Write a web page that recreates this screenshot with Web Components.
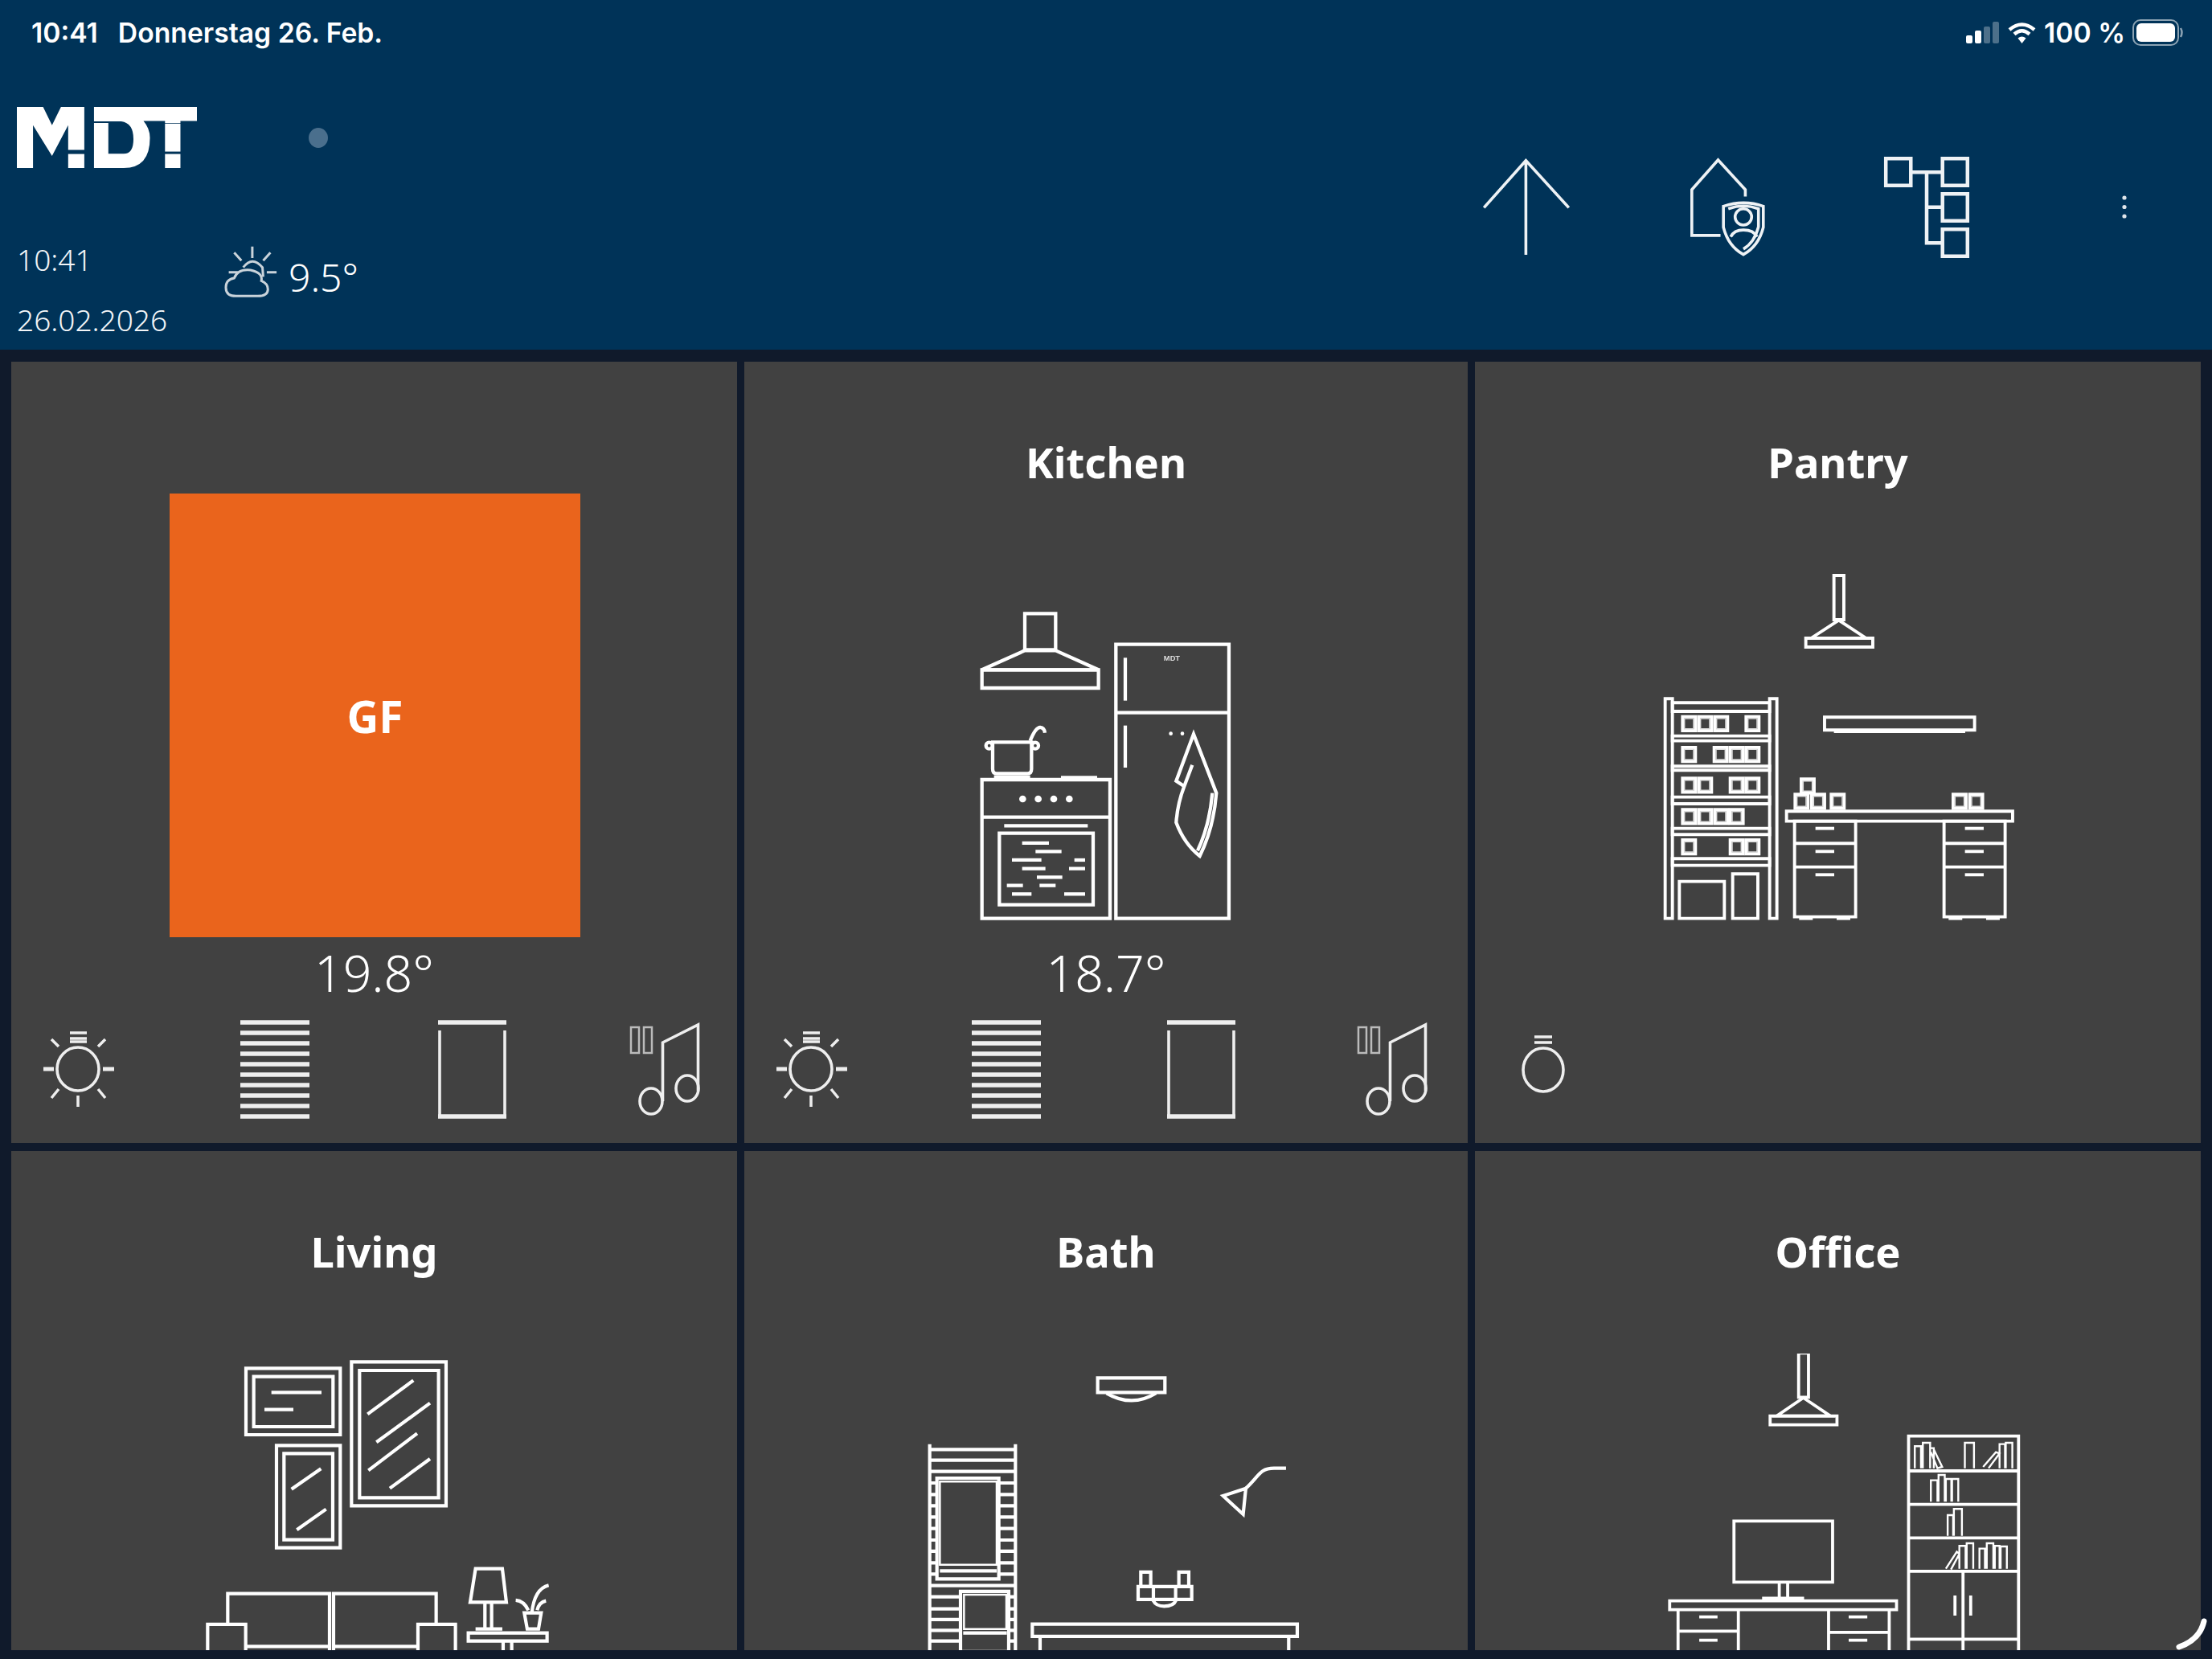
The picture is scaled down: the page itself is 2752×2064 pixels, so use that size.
<!DOCTYPE html>
<html lang="de"><head><meta charset="utf-8"><title>MDT</title>
<style>
html,body{margin:0;padding:0;width:2752px;height:2064px;overflow:hidden;background:#101a2b}
body{font-family:"Noto Sans",Roboto,sans-serif;color:#fff}
</style></head><body>
<app-shell>
  <status-bar></status-bar>
  <app-header></app-header>
  <room-grid>
    <room-tile temp="19.8°" style="--head:164px;--gap:125px"><gf-square>GF</gf-square><action-icon type="sun" slot="actions"></action-icon><action-icon type="blinds" slot="actions"></action-icon><action-icon type="door" slot="actions"></action-icon><action-icon type="music" slot="actions"></action-icon></room-tile>
    <room-tile name="Kitchen" temp="18.7°" style="--gap:122.5px"><scene-art name="kitchen"></scene-art><action-icon type="sun" slot="actions"></action-icon><action-icon type="blinds" slot="actions"></action-icon><action-icon type="door" slot="actions"></action-icon><action-icon type="music" slot="actions"></action-icon></room-tile>
    <room-tile name="Pantry"><scene-art name="pantry"></scene-art><action-icon type="bulb" slot="actions"></action-icon></room-tile>
    <room-tile name="Living"><scene-art name="living"></scene-art></room-tile>
    <room-tile name="Bath"><scene-art name="bath"></scene-art></room-tile>
    <room-tile name="Office"><scene-art name="office"></scene-art></room-tile>
  </room-grid>
  <scroll-mark></scroll-mark>
</app-shell>
<script>
const FONT='"Noto Sans",Roboto,sans-serif';
function def(name,html,init){customElements.define(name,class extends HTMLElement{constructor(){super();this.attachShadow({mode:'open'}).innerHTML=typeof html==='function'?html(this):html;}connectedCallback(){if(init)init(this)}})}
const R=(x1,x2,y1,y2)=>`<rect x="${x1}" y="${y1}" width="${x2-x1}" height="${y2-y1}"/>`;
const L=(x1,y1,x2,y2)=>`<line x1="${x1}" y1="${y1}" x2="${x2}" y2="${y2}"/>`;
const P=(d)=>`<path d="${d}"/>`;

def('app-shell',`<style>:host{display:block;position:relative;width:2752px;height:2064px}</style><slot></slot>`);

def('status-bar',`<style>
:host{display:flex;height:80px;align-items:center;justify-content:space-between;background:#003358;padding:0 35px 0 39px;box-sizing:border-box;font:600 33.700px Inter,Roboto,sans-serif;color:#fff}
.l,.r{display:flex;align-items:center}
.l span+span{margin-left:25px}
svg{display:block}
.r .t{margin:0 9px 0 10px}
</style>
<div class="l"><span>10:41</span><span>Donnerstag 26. Feb.</span></div>
<div class="r">
<svg width="42" height="27" viewBox="0 0 42 27" style="margin-right:10px"><rect x="0" y="17" width="8" height="10" rx="2" fill="#fff"/><rect x="11" y="11" width="8" height="16" rx="2" fill="#fff"/><rect x="22" y="6" width="8" height="21" rx="2" fill="#fff" opacity=".3"/><rect x="33" y="0" width="8" height="27" rx="2" fill="#fff" opacity=".3"/></svg>
<svg width="35" height="27" viewBox="0 0 35 27"><g fill="none" stroke="#fff" stroke-width="4.4"><path d="M2 10Q17.5-3 33 10"/><path d="M8 15.5Q17.500 7 27 15.500"/></g><path d="M12.500 20.500Q17.500 16.500 22.500 20.500L17.500 27Z" fill="#fff"/></svg>
<span class="t">100 %</span>
<svg width="64" height="33" viewBox="0 0 64 33"><rect x="1" y="1" width="56" height="31" rx="9" fill="none" stroke="#fff" stroke-opacity=".55" stroke-width="2"/><rect x="5" y="5" width="48" height="23" rx="6" fill="#fff"/><path d="M60 11q3 5.500 0 11" fill="none" stroke="#fff" stroke-opacity=".55" stroke-width="2.500"/></svg>
</div>`);

def('mdt-logo',`<style>:host{display:block;width:224px;height:76px}svg{display:block}</style>
<svg width="224" height="76" viewBox="47 400 502 227" preserveAspectRatio="none" fill="#fff">
<path d="M47 400H120L145 468L170 400H235V560H190V468L145 582L92 468V627H47Z"/><rect x="190" y="575" width="45" height="52"/>
<path d="M262 400H549V452H503V460H460V452H400Q418 480 418 515Q418 627 345 627H262V460H302V574H345Q372 574 372 520Q372 460 338 454H262Z"/><rect x="460" y="462" width="43" height="104"/><rect x="460" y="575" width="43" height="52"/>
</svg>`);

def('app-header',`<style>
:host{display:flex;justify-content:space-between;height:355px;background:#003358;color:#fff;font-family:"Noto Sans",Roboto,sans-serif}
.left{padding:53px 0 0 21px;width:600px;box-sizing:border-box}
.top{display:flex;align-items:center}
.dot{width:24px;height:25px;border-radius:50%;background:#4a6f8d;margin-left:139px}
.row{display:flex;margin-top:76px}
.clock{width:260px;font-weight:300;font-size:37px;line-height:75px;color:#f2f5f7}
.weather{display:flex;align-items:center;margin-top:21px;height:64px;font-weight:300;font-size:48px}
.weather svg{margin-right:14px}
.weather span{padding-top:12px}
.nav{display:flex;gap:30px;align-items:flex-start;padding-top:98px}
.cell{width:218px;height:160px;display:flex;align-items:center;justify-content:center}
svg{display:block;overflow:visible}
svg *{vector-effect:non-scaling-stroke}
</style>
<div class="left">
 <div class="top"><mdt-logo></mdt-logo><div class="dot"></div></div>
 <div class="row">
  <div class="clock"><div>10:41</div><div>26.02.2026</div></div>
  <div class="weather"><svg width="64" height="64" viewBox="632 920 142 192" preserveAspectRatio="none" fill="none" stroke="#c9d3da" stroke-width="3"><path d="M705 922V965M655 945L675 975M755 945L735 975M745 1018H772M640 1018H665"/><path d="M680 1000Q705 955 733 1000L735 1035"/><path d="M660 1107Q632 1107 632 1075Q632 1045 655 1040Q665 1005 700 1010Q735 1020 730 1050Q748 1060 748 1082Q748 1107 720 1107Z"/></svg><span>9.5°</span></div>
 </div>
</div>
<div class="nav">
 <div class="cell"><svg width="108" height="120" viewBox="76 600 176 348" preserveAspectRatio="none" fill="none" stroke="#eef2f5" stroke-width="3.600"><path d="M78 775L163 605L250 775M163 605V945"/></svg></div>
 <div class="cell"><svg style="margin-left:4px" width="92" height="120" viewBox="500 600 152 354" preserveAspectRatio="none" fill="none" stroke="#eef2f5" stroke-width="3.600"><path d="M613 737V712L557 603L503 712V880H562"/><path d="M568 773Q610 748 650 773V850Q640 920 609 950Q578 920 568 850Z"/><path d="M578 782Q610 762 640 782V848Q632 905 609 930"/><ellipse cx="609" cy="812" rx="17" ry="30"/><path d="M583 885Q590 860 609 860Q630 860 637 885"/></svg></div>
 <div class="cell"><svg style="margin-left:3px" width="104" height="124" viewBox="896 588 174 376" preserveAspectRatio="none" fill="none" stroke="#eef2f5" stroke-width="4.500"><rect x="898" y="592" width="52" height="101"/><rect x="1016" y="592" width="52" height="101"/><rect x="1016" y="725" width="52" height="102"/><rect x="1016" y="859" width="52" height="101"/><path d="M950 643H1016M983 643V910H1016M983 775H1016"/></svg></div>
 <div class="cell"><svg width="6" height="30" viewBox="0 0 6 30" fill="#dfe5ea"><circle cx="3" cy="3" r="2.600"/><circle cx="3" cy="14.500" r="2.600"/><circle cx="3" cy="26" r="2.600"/></svg></div>
</div>`);

def('room-grid',`<style>:host{display:grid;grid-template-columns:903px 900px 903px;grid-auto-rows:972px;column-gap:9px;row-gap:10px;padding:15px 14px 0;box-sizing:border-box;height:1618px;overflow:hidden;align-content:start}</style><slot></slot>`);

def('room-tile',(el)=>`<style>
:host{display:block;background:#414141;color:#fff}
.head{height:var(--head,252px);box-sizing:border-box;padding-bottom:3px;display:flex;align-items:center;justify-content:center;font:700 52.500px ${FONT}}
.body{height:calc(720px - var(--head,252px));display:flex;justify-content:center}
.temp{height:80px;box-sizing:border-box;padding-bottom:2px;display:flex;align-items:center;justify-content:center;font:300 62.500px ${FONT}}
.actions{display:flex;gap:var(--gap,125px);padding-left:23px;margin-top:15px;height:130px}
</style>
<div class="head">${el.getAttribute('name')||''}</div>
<div class="body"><slot></slot></div>
<div class="temp">${el.getAttribute('temp')||''}</div>
<div class="actions"><slot name="actions"></slot></div>`);

def('gf-square',`<style>:host{display:flex;width:511px;height:552px;margin-left:2px;background:#ea641c;align-items:center;justify-content:center;font:700 55px ${FONT};color:#fff}</style><slot></slot>`);

const ICONS={
 sun:`<ellipse cx="60" cy="65" rx="26" ry="27"/><g stroke-width="5"><path d="M17 65H30M91 65H105"/></g><path d="M60 98V112M27 28L36 37M94 28L85 37M36 90L27 101M85 90L94 101" stroke-width="3.500"/><path d="M50 20H71M50 27H71M50 31H71" stroke-width="3.500"/>`,
 bulb:`<ellipse cx="62" cy="66" rx="25" ry="27"/><path d="M51 25H73M51 32H73" stroke-width="3.500"/>`,
 blinds:Array.from({length:10},(_,i)=>`<path d="M17 ${7+i*13}H103" stroke-width="5.500"/>`).join(''),
 door:`<path d="M18 7H103M18 124H103" stroke-width="5.500"/><path d="M20 17V124M101 17V124"/>`,
 music:`<path d="M52.500 105V32L96.500 10V92"/><ellipse cx="38" cy="105" rx="14" ry="16"/><ellipse cx="83" cy="89" rx="14" ry="16"/><g stroke="#bbb" stroke-width="2.500"><rect x="13" y="13" width="10" height="32"/><rect x="29" y="13" width="10" height="32"/></g>`
};
def('action-icon',(el)=>`<style>:host{display:block;width:120px;height:130px}svg{display:block;overflow:visible;filter:blur(.4px)}</style>
<svg width="120" height="130" viewBox="0 0 120 130" fill="none" stroke="#eee" stroke-width="3.600">${ICONS[el.getAttribute('type')]}</svg>`);

function box(x,y,w=48,h=52){return `<rect x="${x}" y="${y}" width="${w}" height="${h}"/><rect x="${x+7}" y="${y+7}" width="${w-14}" height="${h-14}" stroke-width="1.500" stroke="#ddd"/>`}
const rack=()=>{let s='';
 s+=R(95,122,538,1358)+R(485,512,538,1358);
 [[553,585],[677,695],[790,805],[905,930],[1022,1045],[1135,1160]].forEach(([a,b])=>s+=R(122,485,a,b));
 [[605,[160,220,280,397]],[720,[160,278,338,397]],[835,[160,220,338,397]],[952,[160,220,280,338]],[1065,[160,338,397]]].forEach(([y,xs])=>xs.forEach(x=>s+=box(x,y)));
 s+=R(148,316,1220,1358)+R(347,441,1192,1358);
 return s;};
const rungs=[370,410,452,495,538,580,622,665,708,750,793,835,878,920,965,1005,1045,1085];
const SCENES={
 kitchen:{vb:'926 702 900',t:'translate(1180 730) scale(.3333)',s:4.3,d:
  R(285,400,100,235)+P('M285 238L125 310H560L400 238Z')+R(125,560,310,378)+
  R(625,1047,215,1238)+L(625,470,1047,470)+L(660,265,660,425)+L(660,518,660,675)+
  `<g fill="#fff" stroke="none"><circle cx="830" cy="548" r="7"/><circle cx="873" cy="548" r="7"/></g>`+
  P('M915 550L1000 770Q990 900 938 1005Q880 960 850 880Q855 810 880 745L850 725ZM910 665L880 745M985 770Q975 890 930 985')+
  R(125,603,720,1238)+L(125,860,603,860)+[277,335,393,451].map(x=>`<circle cx="${x}" cy="792" r="13" fill="#fff" stroke="none"/>`).join('')+
  L(208,892,520,892)+R(190,540,920,1187)+
  [[275,375,957],[325,422,988],[237,347,1020],[470,510,1020],[275,362,1052],[450,510,1052],[330,425,1084],[218,278,1115],[340,400,1115],[237,310,1147],[432,510,1147]].map(a=>L(a[0],a[2],a[1],a[2])).join('')+
  P('M165 580H310V680Q310 697 295 697H180Q165 697 165 680Z')+`<circle cx="152" cy="593" r="12"/><circle cx="324" cy="593" r="12"/>`+
  P('M305 575Q325 525 342 525Q358 527 360 545')+L(170,710,305,710)+L(420,712,555,712)+
  `<text x="834" y="276" text-anchor="middle" font-family="Liberation Sans,sans-serif" font-weight="700" font-size="28" fill="#ddd" stroke="none">MDT</text>`},
 pantry:{vb:'1835 702 903',t:'translate(2040 690) scale(.3333)',s:3.9,d:
  R(725,762,78,243)+P('M743 245L640 312H845Z')+R(620,870,312,345)+
  R(690,1250,607,655)+L(725,660,1215,660)+rack()+
  R(548,1392,958,995)+[[580,895],[642,895],[715,895],[1170,895],[1232,895],[603,838]].map(a=>box(a[0],a[1])).join('')+
  [578,1136].map(x=>R(x,x+228,995,1352)+L(x,1078,x+228,1078)+L(x,1166,x+228,1166)+[1022,1108,1195].map(y=>L(x+78,y,x+148,y)).join('')+L(x+17,1358,x+68,1358)+L(x+157,1358,x+208,1358)).join('')},
 living:{vb:'14 1684 903',t:'translate(220 1660) scale(.3333)',s:4.2,d:
  R(258,610,127,375)+R(287,583,158,345)+L(353,217,540,217)+L(327,281,435,281)+
  R(652,1005,103,640)+R(682,977,135,610)+L(712,298,883,172)+L(745,403,945,257)+L(715,508,897,370)+L(795,575,945,465)+
  R(372,610,415,797)+R(400,582,445,767)+L(428,578,538,502)+L(448,730,557,653)+
  P('M190 1080V968H570V1190M585 1190V968H968V1080')+P('M115 1195V1083H257V1195M900 1195V1083H1040V1195')+L(257,1165,565,1165)+L(590,1165,900,1165)+
  P('M1115 875H1215L1230 1000H1095Z')+P('M1150 1000V1100M1175 1000V1100M1115 1100H1215')+R(1088,1382,1115,1145)+P('M1218 1145V1195M1250 1145V1195')+
  P('M1297 1040H1360L1350 1100H1308Z')+P('M1325 1040Q1335 950 1388 937M1312 1030Q1295 995 1265 993M1345 1030Q1352 1000 1378 995')},
 bath:{vb:'926 1684 900',t:'translate(1120 1680) scale(.3333)',s:4.2,d:
  P('M110 350V1125M430 350V1125')+rungs.map(y=>L(110,y,430,y)).join('')+
  `<g fill="#414141">`+R(137,368,477,853)+R(225,405,900,1125)+`</g>`+`<g stroke-width="2.500">`+R(148,360,490,800)+R(238,396,912,1040)+`</g>`+L(148,823,360,823)+L(235,1055,398,1055)+
  R(737,988,103,157)+P('M770 160Q865 215 955 160')+
  P('M1205 543L1290 515L1280 612Z')+P('M1290 515C1340 470 1340 440 1395 440H1440')+
  R(898,935,828,882)+R(1040,1077,828,882)+R(888,1088,882,930)+P('M945 888V935Q955 955 985 955Q1020 955 1028 935V888')+
  R(493,1482,1022,1068)+P('M522 1068V1125M1450 1068V1125')},
 office:{vb:'1835 1684 903',t:'translate(2040 1660) scale(.4545 .3333)',s:3.8,d:
  R(435,462,70,235)+P('M448 237L375 305H522Z')+R(357,540,305,338)+
  R(258,528,697,925)+P('M382 925V985M405 925V985M335 985H450')+
  R(82,703,995,1028)+P('M105 1028V1200M270 1028V1200M105 1108H270M517 1028V1200M683 1028V1200M517 1113H683')+P('M163 1055H213M163 1142H213M572 1055H623M572 1142H623')+
  P('M736 1200V380H1037V1200M736 510H1037M736 635H1037M736 760H1037M736 885H1037M736 1138H1037M885 885V1200M863 975V1050M906 975V1050')+
  `<g stroke-width="2.400">`+P('M753 500V418H770V500M775 500V405H795V500M795 500V425H805V500M805 430L828 495L815 500L797 440')+
  P('M890 500V405H915V500M940 495L975 440L985 445L955 500M985 500V410H1000V500M1002 500V405H1020V500')+
  P('M797 625V545H815V625M818 625V525H835V625M838 625V540H853V625M855 625V540H872V625')+
  P('M843 752V675H858V752M860 752V652H882V752')+
  P('M838 875L868 812L875 820L852 878M875 875V790H892V875M895 875V780H913V875M930 875V800H945V875M950 875V780H968V875M972 875V790H985V875M988 875V792H1005V875')+`</g>`}
};
def('scene-art',(el)=>{const s=SCENES[el.getAttribute('name')];const w=s.vb.split(' ')[2];return `<style>:host{display:block;width:100%;height:100%}svg{display:block;filter:blur(.6px)}svg *{vector-effect:non-scaling-stroke}</style>
<svg width="${w}" height="468" viewBox="${s.vb} 468" fill="none" stroke="#fff" stroke-width="${s.s}"><g transform="${s.t}">${s.d}</g></svg>`});

def('scroll-mark',`<style>:host{position:absolute;left:2700px;top:2010px;width:52px;height:44px}svg{display:block}</style>
<svg width="52" height="44" viewBox="0 0 52 44"><path d="M42 7Q37 30 11 39" fill="none" stroke="#fff" stroke-width="7" stroke-linecap="round"/></svg>`);
</script>
</body></html>
